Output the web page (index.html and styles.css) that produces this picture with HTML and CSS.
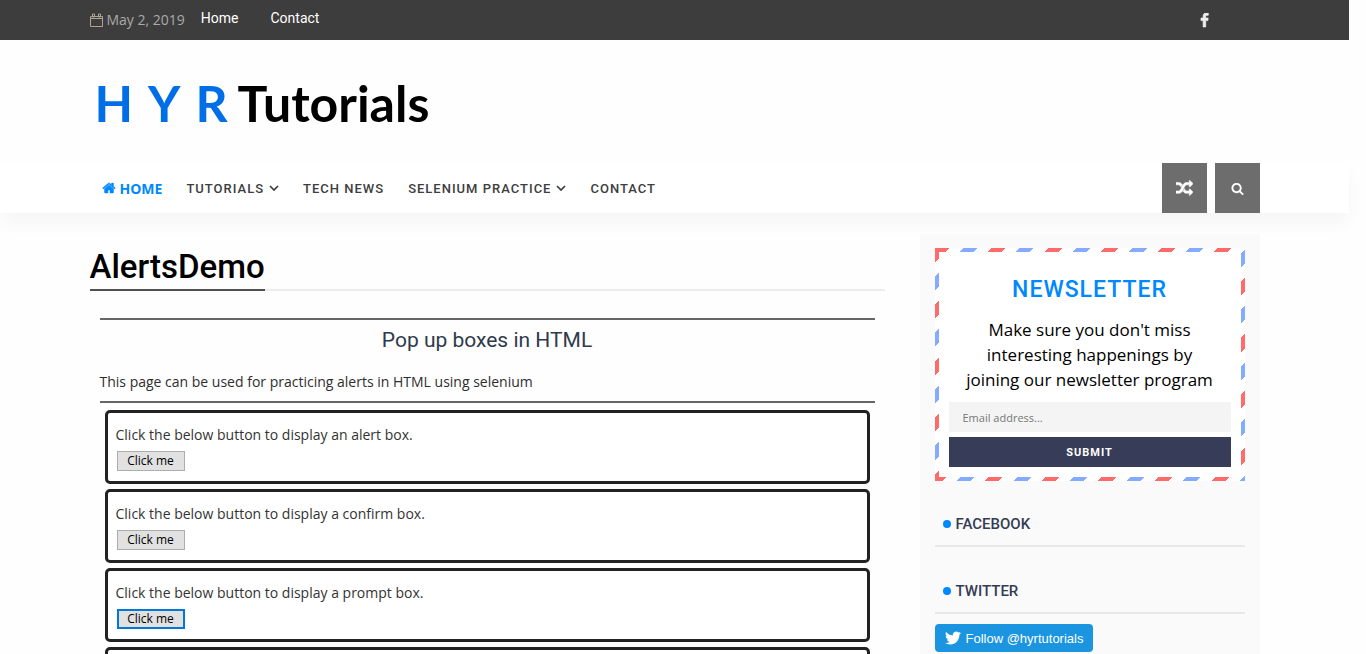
FILE: index.html
```
<!DOCTYPE html>
<html lang="en">
<head>
<meta charset="utf-8">
<title>AlertsDemo - H Y R Tutorials</title>
<link rel="stylesheet" href="styles.css">
</head>
<body>
<div class="topbar">
  <div class="container topbar-inner">
    <svg class="icon-calendar" viewBox="0 0 13 14" aria-hidden="true"><path d="M.5 3.5h12v10H.5zM.5 5.5h12" fill="none" stroke="currentColor"/><path d="M2.500 1h2v3h-2zM8.500 1h2v3h-2z" fill="none" stroke="currentColor"/></svg>
    <span class="date">May 2, 2019</span>
    <nav class="top-links" aria-label="Top"><a href="#">Home</a><a href="#">Contact</a></nav>
    <a class="social" href="#" aria-label="Facebook"><svg viewBox="0 0 1792 1792"><path fill="currentColor" stroke="currentColor" stroke-width="90" d="M1343 12v264h-157q-86 0-116 36t-30 108v189h293l-39 296h-254v759h-306v-759h-255v-296h255v-218q0-186 104-288.500t277-102.500q147 0 228 12z"/></svg></a>
  </div>
</div>
<header class="container masthead">
  <a class="logo" href="#"><span class="logo-blue"><span>H</span><span>Y</span><span>R</span></span><span>Tutorials</span></a>
</header>
<div class="navbar">
  <div class="container navbar-inner">
    <nav class="main-nav" aria-label="Main">
      <a class="active" href="#"><svg class="icon-home" viewBox="0 0 1792 1792" aria-hidden="true"><path fill="currentColor" stroke="currentColor" stroke-width="60" d="M1472 992v480q0 26-19 45t-45 19h-384v-384h-256v384h-384q-26 0-45-19t-19-45v-480q0-1 .5-3t.5-3l575-474 575 474q1 2 1 6zm223-69l-62 74q-8 9-21 11h-3q-13 0-21-7l-692-577-692 577q-12 8-24 7-13-2-21-11l-62-74q-8-10-7-23.500t11-21.500l719-599q32-26 76-26t76 26l244 204v-195q0-14 9-23t23-9h192q14 0 23 9t9 23v408l219 182q10 8 11 21.500t-7 23.500z"/></svg>Home</a>
      <a href="#">Tutorials<svg class="icon-caret" viewBox="0 0 10 6" aria-hidden="true"><path d="M1 1l4 4 4-4" fill="none" stroke="currentColor" stroke-width="1.700"/></svg></a>
      <a href="#">Tech News</a>
      <a href="#">Selenium Practice<svg class="icon-caret" viewBox="0 0 10 6" aria-hidden="true"><path d="M1 1l4 4 4-4" fill="none" stroke="currentColor" stroke-width="1.700"/></svg></a>
      <a href="#">Contact</a>
    </nav>
    <div class="tools">
      <button type="button" aria-label="Random post"><svg class="icon-random" viewBox="0 0 1792 1792"><path fill="currentColor" stroke="currentColor" stroke-width="60" d="M666 481q-60 92-137 273-22-45-37-72.500t-40.500-63.500-51-56.500-63-35-81.500-14.500h-224q-14 0-23-9t-9-23v-192q0-14 9-23t23-9h224q250 0 410 225zm1126 799q0 14-9 23l-320 320q-9 9-23 9-13 0-22.500-9.500t-9.500-22.500v-192q-32 0-85 .5t-81 1-73-1-71-5-64-10.500-63-18.500-58-28.500-59-40-55-53.500-56-69.500q59-93 136-273 22 45 37 72.500t40.500 63.500 51 56.500 63 35 81.500 14.500h256v-192q0-14 9-23t23-9q12 0 24 10l319 319q9 9 9 23zm0-896q0 14-9 23l-320 320q-9 9-23 9-13 0-22.500-9.500t-9.500-22.500v-192h-256q-48 0-87 15t-69 45-51 61.500-45 77.500q-32 62-78 171-29 66-49.500 111t-54 105-64 100-74 83-90 68.500-106.500 42-128 16.500h-224q-14 0-23-9t-9-23v-192q0-14 9-23t23-9h224q48 0 87-15t69-45 51-61.500 45-77.500q32-62 78-171 29-66 49.500-111t54-105 64-100 74-83 90-68.500 106.500-42 128-16.500h256v-192q0-14 9-23t23-9q12 0 24 10l319 319q9 9 9 23z"/></svg></button>
      <button type="button" aria-label="Search"><svg class="icon-search" viewBox="0 0 1792 1792"><path fill="currentColor" d="M1216 832q0-185-131.500-316.500t-316.500-131.500-316.500 131.500-131.500 316.500 131.500 316.500 316.500 131.500 316.500-131.500 131.500-316.500zm512 832q0 52-38 90t-90 38q-54 0-90-38l-343-342q-179 124-399 124-143 0-273.500-55.500t-225-150-150-225-55.500-273.500 55.500-273.500 150-225 225-150 273.500-55.500 273.500 55.500 225 150 150 225 55.500 273.500q0 220-124 399l343 343q37 37 37 90z"/></svg></button>
    </div>
  </div>
</div>
<div class="container content">
  <main class="post">
    <div class="title-row"><h1>AlertsDemo</h1></div>
    <div class="post-body">
      <hr>
      <h2>Pop up boxes in HTML</h2>
      <p class="intro">This page can be used for practicing alerts in HTML using selenium</p>
      <hr>
      <div class="demos">
        <section class="demo"><p>Click the below button to display an alert box.</p><button type="button">Click me</button></section>
        <section class="demo"><p>Click the below button to display a confirm box.</p><button type="button">Click me</button></section>
        <section class="demo"><p>Click the below button to display a prompt box.</p><button class="focused" type="button">Click me</button></section>
        <section class="demo"></section>
      </div>
    </div>
  </main>
  <aside class="sidebar">
    <form class="newsletter">
      <h2>Newsletter</h2>
      <p>Make sure you don't miss interesting happenings by joining our newsletter program</p>
      <input type="email" placeholder="Email address..." aria-label="Email address">
      <button type="submit">Submit</button>
    </form>
    <h3>Facebook</h3>
    <h3>Twitter</h3>
    <a class="follow" href="#"><svg viewBox="0 0 24 24" aria-hidden="true"><path fill="currentColor" d="M23.953 4.570a10 10 0 01-2.825.775 4.958 4.958 0 002.163-2.723c-.951.555-2.005.959-3.127 1.184a4.920 4.920 0 00-8.384 4.482C7.690 8.095 4.067 6.130 1.640 3.162a4.822 4.822 0 00-.666 2.475c0 1.710.870 3.213 2.188 4.096a4.904 4.904 0 01-2.228-.616v.060a4.923 4.923 0 003.946 4.827 4.996 4.996 0 01-2.212.085 4.936 4.936 0 004.604 3.417 9.867 9.867 0 01-6.102 2.105c-.390 0-.779-.023-1.170-.067a13.995 13.995 0 007.557 2.209c9.053 0 13.998-7.496 13.998-13.985 0-.210 0-.420-.015-.630A9.935 9.935 0 0024 4.590z"/></svg>Follow @hyrtutorials</a>
  </aside>
</div>
</body>
</html>
```
FILE: styles.css
```
* { box-sizing: border-box; }
body {
  margin: 0;
  height: 100vh;
  padding-right: 17px;
  overflow: hidden;
  background: #fefefe;
  color: #2e2e2e;
  font-family: "Open Sans", sans-serif;
  font-size: 14px;
}
h1, h2, h3, p { margin: 0; }
a { color: inherit; text-decoration: none; }
button, input { font: inherit; }
svg { display: block; }
.container { max-width: 1170px; margin: 0 auto; }

.topbar { background: #3d3d3d; }
.topbar-inner { display: flex; align-items: center; height: 40px; }
.icon-calendar { width: 13px; height: 14px; margin-right: 4px; color: #b0a392; }
.date { padding-bottom: 2px; color: #aaa; }
.top-links {
  display: flex;
  gap: 32px;
  margin-left: 16px;
  padding-bottom: 4px;
  color: #fff;
  font: 14px Roboto, sans-serif;
}
.social { margin-left: auto; margin-right: 48px; color: #eee; }
.social svg { width: 15px; height: 15px; }

.masthead { display: flex; height: 123px; padding: 33px 5px 0; }
.logo { display: flex; gap: 10px; color: #000; font: 700 50px/60px Lato, sans-serif; }
.logo-blue { display: flex; gap: 15px; color: #006ee6; }

.navbar { background: #fff; box-shadow: 0 10px 18px rgba(0, 0, 0, 0.035); }
.navbar-inner { display: flex; justify-content: space-between; height: 50px; }
.main-nav {
  display: flex;
  align-items: center;
  gap: 24px;
  padding-left: 12px;
  color: #3d3d3d;
  font: 500 13px Roboto, sans-serif;
  letter-spacing: 1px;
  text-transform: uppercase;
}
.main-nav a { display: flex; align-items: center; }
.main-nav .active { color: #0088ff; font: 700 14px "Open Sans", sans-serif; letter-spacing: 0; }
.icon-home { width: 14px; height: 14px; margin-right: 4px; }
.icon-caret { width: 10px; height: 6px; margin-left: 5px; }
.tools { display: flex; gap: 8px; }
.tools button {
  display: flex;
  align-items: center;
  justify-content: center;
  width: 45px;
  padding: 0;
  border: 0;
  background: #6d6d6d;
  color: #fff;
}
.icon-random { width: 17px; height: 17px; }
.icon-search { width: 13px; height: 13px; }

.content { display: flex; align-items: flex-start; gap: 35px; padding-top: 21px; }
.post { flex: 1; padding-top: 11px; }
.title-row { display: flex; border-bottom: 2px solid #ececec; }
h1 {
  margin-bottom: -2px;
  border-bottom: 2px solid #505050;
  color: #000;
  font: 500 33px/44px Roboto, sans-serif;
}
.post-body { padding: 27px 10px 0; }
hr { height: 2px; margin: 0; border: 0; background: #666; }
.post-body h2 {
  padding: 5px 0 13px;
  color: #2e3a4b;
  font: 400 21px/30px Roboto, sans-serif;
  text-align: center;
}
.intro { padding: 2px 0 7px; line-height: 24px; }
.demos { display: flex; flex-direction: column; gap: 5px; padding: 7px 5px 0; }
.demo {
  min-height: 74px;
  padding: 10px 8px 9px;
  border: 3px solid #222;
  border-radius: 5px;
  background: #fff;
}
.demo p { line-height: 24px; color: #333; }
.demo button {
  display: block;
  width: 68px;
  height: 20px;
  margin: 4px 1px 0;
  padding: 0;
  border: 1px solid #adadad;
  background: #e1e1e1;
  color: #000;
  font: 12px/16px "Open Sans", sans-serif;
}
.demo .focused { border: 2px solid #0078d7; }

.sidebar { flex: 0 0 340px; min-height: 440px; padding: 14px 15px; background: #fafafa; }
.newsletter {
  padding: 21px 10px 10px;
  border: 4px solid transparent;
  background:
    linear-gradient(#fff, #fff) padding-box,
    repeating-linear-gradient(135deg, #ff6b6b 0 10px, #fff 10px 20px, #84abff 20px 30px, #fff 30px 40px) border-box;
  text-align: center;
}
.newsletter h2 {
  margin-bottom: 10px;
  color: #0088ff;
  font: 500 23px/34px Roboto, sans-serif;
  letter-spacing: 1px;
  text-transform: uppercase;
}
.newsletter p { color: #000; font-size: 17px; line-height: 25px; padding: 0 12px; }
.newsletter input {
  display: block;
  width: 100%;
  height: 30px;
  margin: 10px 0 5px;
  padding: 0 14px;
  border: 0;
  background: #f4f4f4;
  font-size: 11px;
}
.newsletter input::placeholder { color: #777; }
.newsletter button {
  display: block;
  width: 100%;
  height: 30px;
  border: 0;
  background: #373d59;
  color: #fff;
  font: 700 11px Roboto, sans-serif;
  letter-spacing: 1px;
  text-transform: uppercase;
}
.sidebar h3 {
  display: flex;
  align-items: center;
  gap: 5px;
  margin-top: 24px;
  padding: 5px 8px 6px;
  border-bottom: 2px solid #e8e8e8;
  color: #343c55;
  font: 500 15px/30px Roboto, sans-serif;
  text-transform: uppercase;
}
.sidebar .newsletter + h3 { margin-top: 23px; }
.sidebar h3::before { content: ""; width: 8px; height: 8px; border-radius: 50%; background: #0088ff; }
.follow {
  display: flex;
  align-items: center;
  gap: 5px;
  width: fit-content;
  height: 28px;
  margin-top: 10px;
  padding: 0 10px;
  border-radius: 4px;
  background: #1b95e0;
  color: #fff;
  font: 13px "Liberation Sans", Arial, sans-serif;
}
.follow svg { width: 16px; height: 16px; }
```
